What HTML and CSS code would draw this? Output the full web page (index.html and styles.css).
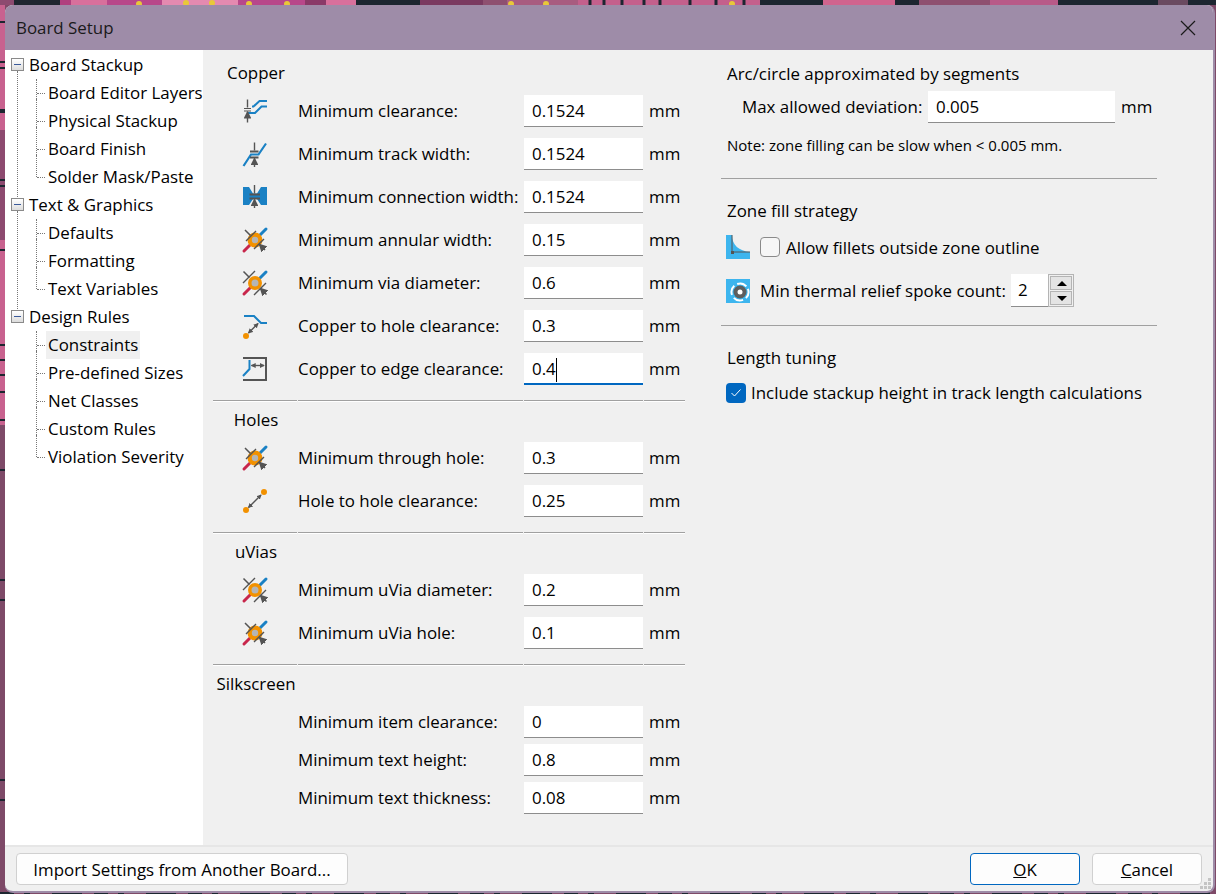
FILE: index.html
```html
<!DOCTYPE html>
<html lang="en">
<head>
  <meta charset="UTF-8" />
  <title>Board Setup</title>
  <link rel="stylesheet" href="styles.css">
</head>
<body>
  <svg class="pcb" width="1216" height="894" viewBox="0 0 1216 894">
    <rect width="1216" height="894" fill="#7e4a68"/>
    <!-- top edge -->
    <rect x="0" y="0" width="14" height="5" fill="#8d4a70"/>
    <rect x="14" y="0" width="46" height="5" fill="#1f2630"/>
    <rect x="60" y="0" width="11" height="5" fill="#b0407e"/>
    <rect x="71" y="0" width="36" height="5" fill="#d8709c"/>
    <rect x="107" y="0" width="55" height="5" fill="#b8488a"/>
    <rect x="162" y="0" width="76" height="5" fill="#e48ab0"/>
    <rect x="238" y="0" width="67" height="5" fill="#b8488a"/>
    <rect x="305" y="0" width="21" height="5" fill="#8a3a68"/>
    <rect x="326" y="0" width="30" height="5" fill="#d8709c"/>
    <rect x="356" y="0" width="64" height="5" fill="#1c2630"/>
    <rect x="420" y="0" width="63" height="5" fill="#7a3a60"/>
    <rect x="483" y="0" width="24" height="5" fill="#8e5070"/>
    <rect x="507" y="0" width="71" height="5" fill="#a85c80"/>
    <rect x="578" y="0" width="182" height="5" fill="#c4608c"/>
    <path d="M590 0v5M604 0v5M622 0v5M644 0v5M660 0v5M690 0v5M716 0v5M744 0v5" stroke="#1c2630" stroke-width="3"/>
    <rect x="760" y="0" width="63" height="5" fill="#1c2630"/>
    <rect x="823" y="0" width="72" height="5" fill="#d0648e"/>
    <rect x="895" y="0" width="24" height="5" fill="#1c2630"/>
    <rect x="919" y="0" width="71" height="5" fill="#8e5070"/>
    <rect x="990" y="0" width="68" height="5" fill="#b85a88"/>
    <rect x="1058" y="0" width="100" height="5" fill="#1c2630"/>
    <rect x="1158" y="0" width="30" height="5" fill="#6a4a60"/>
    <rect x="1188" y="0" width="28" height="5" fill="#1c2630"/>
    <g fill="#e8c838">
      <circle cx="139" cy="4" r="3"/><circle cx="186" cy="3" r="3"/><circle cx="212" cy="3" r="3"/>
      <circle cx="249" cy="4" r="3"/><circle cx="287" cy="4" r="3"/><circle cx="511" cy="4" r="3"/>
      <circle cx="546" cy="4" r="3"/><circle cx="732" cy="4" r="3"/>
    </g>
    <!-- left edge -->
    <rect x="0" y="5" width="5" height="420" fill="#c8628f"/>
    <rect x="0" y="130" width="5" height="110" fill="#8d4a70"/>
    <path d="M0 22h5M0 62h5M0 68h5M0 110h5M0 112h5M0 180h5M0 186h5M0 250h5M0 345h5M0 360h5M0 375h5M0 392h5M0 420h5M0 470h5M0 580h5M0 600h5M0 780h5M0 800h5" stroke="#1c2630" stroke-width="2"/>
    <!-- bottom edge -->
    <path d="M0 893H1216" stroke="#1c2630" stroke-width="2" stroke-dasharray="14 10 6 22 30 12"/>
  </svg>

  <svg class="defs" width="0" height="0">
    <defs>
      <marker id="tip" viewBox="0 0 6 6" refX="5" refY="3" markerWidth="5.6" markerHeight="5.6" orient="auto-start-reverse">
        <path d="M0 0L6 3L0 6z" fill="#545454"/>
      </marker>
      <marker id="tip-sm" viewBox="0 0 6 6" refX="5" refY="3" markerWidth="3.6" markerHeight="4.4" orient="auto-start-reverse">
        <path d="M0 0L6 3L0 6z" fill="#545454"/>
      </marker>
      <g id="via-wide">
        <path d="M1 23L7 17" stroke="#c8264b" stroke-width="3" stroke-linecap="round"/>
        <path d="M17 7L23 1" stroke="#1a81c4" stroke-width="3" stroke-linecap="round"/>
        <circle cx="12" cy="12" r="5.25" fill="#b5b5b5" stroke="#f29100" stroke-width="3.5"/>
        <path d="M0 12L12 0M11 24L23 12" stroke="#545454" stroke-width="1.4"/>
        <path d="M0.5 0.5L6.5 6.5M23.5 23.5L17.5 17.5" stroke="#545454" stroke-width="1.5" marker-end="url(#tip)"/>
      </g>
      <g id="via-hole">
        <path d="M1 23L7 17" stroke="#c8264b" stroke-width="3" stroke-linecap="round"/>
        <path d="M17 7L23 1" stroke="#1a81c4" stroke-width="3" stroke-linecap="round"/>
        <circle cx="12" cy="12" r="7.5" fill="#f29100"/>
        <circle cx="12" cy="12" r="3.2" fill="#b5b5b5"/>
        <path d="M3 13L13 3M11 21L21 11" stroke="#545454" stroke-width="1.4"/>
        <path d="M2 2L7.5 7.5M22 22L16.5 16.5" stroke="#545454" stroke-width="1.5" marker-end="url(#tip)"/>
      </g>
    </defs>
  </svg>

  <div class="dialog">
    <div class="titlebar">
      <span class="title">Board Setup</span>
      <svg class="close" width="16" height="16" viewBox="0 0 16 16"><path d="M1 1L15 15M15 1L1 15" stroke="#1a1a1a" stroke-width="1.2"/></svg>
    </div>

    <div class="content">
      <ul class="tree">
        <li class="root">
          <div class="row"><span class="expander"></span>Board Stackup</div>
          <ul>
            <li><div class="row">Board Editor Layers</div></li>
            <li><div class="row">Physical Stackup</div></li>
            <li><div class="row">Board Finish</div></li>
            <li><div class="row">Solder Mask/Paste</div></li>
          </ul>
        </li>
        <li class="root">
          <div class="row"><span class="expander"></span>Text &amp; Graphics</div>
          <ul>
            <li><div class="row">Defaults</div></li>
            <li><div class="row">Formatting</div></li>
            <li><div class="row">Text Variables</div></li>
          </ul>
        </li>
        <li class="root">
          <div class="row"><span class="expander"></span>Design Rules</div>
          <ul>
            <li><div class="row selected">Constraints</div></li>
            <li><div class="row">Pre-defined Sizes</div></li>
            <li><div class="row">Net Classes</div></li>
            <li><div class="row">Custom Rules</div></li>
            <li><div class="row">Violation Severity</div></li>
          </ul>
        </li>
      </ul>

      <div class="rules">
        <section class="group">
          <h3>Copper</h3>
          <div class="rule">
            <svg width="24" height="24" viewBox="0 0 24 24" fill="none">
              <path d="M9 7.5H10.5L16.5 2H24M5 14H12L18.5 7.5H24" stroke="#1a81c4" stroke-width="2"/>
              <path d="M1 9.5H8M1 12H8" stroke="#545454" stroke-width="1.2"/>
              <path d="M4.5 0.5V8.5M4.5 23.5V13" stroke="#545454" stroke-width="1.4" marker-end="url(#tip)"/>
            </svg>
            <label>Minimum clearance:</label><span class="field">0.1524</span><span class="unit">mm</span>
          </div>
          <div class="rule">
            <svg width="24" height="24" viewBox="0 0 24 24" fill="none">
              <path d="M0.5 24L8 12.5H15.5L23 1.5" stroke="#1a81c4" stroke-width="2.2"/>
              <path d="M7 9.5H15.5M7 15.5H15.5" stroke="#545454" stroke-width="1.8"/>
              <path d="M11.5 0.5V8.5M11.5 25V16.5" stroke="#545454" stroke-width="1.4" marker-end="url(#tip)"/>
            </svg>
            <label>Minimum track width:</label><span class="field">0.1524</span><span class="unit">mm</span>
          </div>
          <div class="rule">
            <svg width="24" height="24" viewBox="0 0 24 24" fill="none">
              <path d="M0 2H6L10 8.5H14L18 2H24V20H18L14 14H10L6 20H0z" fill="#1a81c4"/>
              <path d="M6.5 9.5H17M6.5 13.5H17" stroke="#545454" stroke-width="1.8"/>
              <path d="M11.5 0V8.5M11.5 23V14.5" stroke="#545454" stroke-width="1.4" marker-end="url(#tip)"/>
            </svg>
            <label>Minimum connection width:</label><span class="field">0.1524</span><span class="unit">mm</span>
          </div>
          <div class="rule">
            <svg width="24" height="24" viewBox="0 0 24 24" fill="none"><use href="#via-hole"/></svg>
            <label>Minimum annular width:</label><span class="field">0.15</span><span class="unit">mm</span>
          </div>
          <div class="rule">
            <svg width="24" height="24" viewBox="0 0 24 24" fill="none"><use href="#via-wide"/></svg>
            <label>Minimum via diameter:</label><span class="field">0.6</span><span class="unit">mm</span>
          </div>
          <div class="rule">
            <svg width="24" height="24" viewBox="0 0 24 24" fill="none">
              <path d="M1 2H11L18 9H24" stroke="#1a81c4" stroke-width="2"/>
              <circle cx="3" cy="22" r="3" fill="#f29100"/>
              <path d="M5.5 19L15 9.5" stroke="#545454" stroke-width="1.4" marker-start="url(#tip-sm)" marker-end="url(#tip-sm)"/>
            </svg>
            <label>Copper to hole clearance:</label><span class="field">0.3</span><span class="unit">mm</span>
          </div>
          <div class="rule">
            <svg width="24" height="24" viewBox="0 0 24 24" fill="none">
              <path d="M0 1H23V23H0" stroke="#545454" stroke-width="2"/>
              <path d="M6.5 3V12L0 19" stroke="#1a81c4" stroke-width="2"/>
              <path d="M8.5 8.5H21" stroke="#545454" stroke-width="1.4" marker-start="url(#tip-sm)" marker-end="url(#tip-sm)"/>
            </svg>
            <label>Copper to edge clearance:</label><span class="field focus">0.4<i class="caret"></i></span><span class="unit">mm</span>
          </div>
        </section>
        <div class="sep"><span></span><span></span><span></span><span></span></div>

        <section class="group holes">
          <h3>Holes</h3>
          <div class="rule">
            <svg width="24" height="24" viewBox="0 0 24 24" fill="none"><use href="#via-hole"/></svg>
            <label>Minimum through hole:</label><span class="field">0.3</span><span class="unit">mm</span>
          </div>
          <div class="rule">
            <svg width="24" height="24" viewBox="0 0 24 24" fill="none">
              <circle cx="3" cy="21" r="3" fill="#f29100"/>
              <circle cx="21" cy="3" r="3" fill="#f29100"/>
              <path d="M5.5 18.5L18 6" stroke="#545454" stroke-width="1.4" marker-start="url(#tip-sm)" marker-end="url(#tip-sm)"/>
            </svg>
            <label>Hole to hole clearance:</label><span class="field">0.25</span><span class="unit">mm</span>
          </div>
        </section>
        <div class="sep"><span></span><span></span><span></span><span></span></div>

        <section class="group vias">
          <h3>uVias</h3>
          <div class="rule">
            <svg width="24" height="24" viewBox="0 0 24 24" fill="none"><use href="#via-wide"/></svg>
            <label>Minimum uVia diameter:</label><span class="field">0.2</span><span class="unit">mm</span>
          </div>
          <div class="rule">
            <svg width="24" height="24" viewBox="0 0 24 24" fill="none"><use href="#via-hole"/></svg>
            <label>Minimum uVia hole:</label><span class="field">0.1</span><span class="unit">mm</span>
          </div>
        </section>
        <div class="sep"><span></span><span></span><span></span><span></span></div>

        <section class="group silk">
          <h3>Silkscreen</h3>
          <div class="rule"><i></i><label>Minimum item clearance:</label><span class="field">0</span><span class="unit">mm</span></div>
          <div class="rule"><i></i><label>Minimum text height:</label><span class="field">0.8</span><span class="unit">mm</span></div>
          <div class="rule"><i></i><label>Minimum text thickness:</label><span class="field">0.08</span><span class="unit">mm</span></div>
        </section>
      </div>

      <div class="options">
        <h3>Arc/circle approximated by segments</h3>
        <div class="deviation">
          <label>Max allowed deviation:</label><span class="field">0.005</span><span class="unit">mm</span>
        </div>
        <p class="note">Note: zone filling can be slow when &lt; 0.005 mm.</p>
        <hr>
        <h3>Zone fill strategy</h3>
        <div class="fillets">
          <svg width="24" height="24" viewBox="0 0 24 24">
            <path d="M0 0H6C6 10 13 16 24 17V24H0z" fill="#3db5ee"/>
            <path d="M6 0V17H24" fill="none" stroke="#545454" stroke-width="1"/>
            <rect x="5" y="16" width="3" height="3" fill="#545454"/>
          </svg>
          <span class="check"></span>
          <label>Allow fillets outside zone outline</label>
        </div>
        <div class="spokes">
          <svg width="24" height="24" viewBox="0 0 24 24">
            <rect width="24" height="24" fill="#3db5ee"/>
            <circle cx="14" cy="13" r="8.5" fill="none" stroke="#fff" stroke-width="2" stroke-dasharray="10 3.4" transform="rotate(-22 14 13)"/>
            <circle cx="14" cy="13" r="6.5" fill="#5e5e5e"/>
            <circle cx="14" cy="13" r="2.5" fill="#fff"/>
          </svg>
          <label>Min thermal relief spoke count:</label>
          <div class="spin">
            <span class="spin-value">2</span>
            <div class="spin-btns">
              <span class="up"></span>
              <span class="down"></span>
            </div>
          </div>
        </div>
        <hr class="second">
        <h3>Length tuning</h3>
        <div class="stackup">
          <span class="check on">
            <svg width="12" height="10" viewBox="0 0 12 10"><path d="M1.5 5L4.5 8L10.5 1.5" fill="none" stroke="#fff" stroke-width="1"/></svg>
          </span>
          <label>Include stackup height in track length calculations</label>
        </div>
      </div>
    </div>

    <div class="footer">
      <button>Import Settings from Another Board...</button>
      <div class="actions">
        <button class="ok"><u>O</u>K</button>
        <button><u>C</u>ancel</button>
      </div>
      <svg class="grip" width="12" height="12" viewBox="0 0 12 12" fill="#c4c4c4">
        <rect x="8" y="0" width="3" height="3"/><rect x="4" y="4" width="3" height="3"/><rect x="8" y="4" width="3" height="3"/>
        <rect x="0" y="8" width="3" height="3"/><rect x="4" y="8" width="3" height="3"/><rect x="8" y="8" width="3" height="3"/>
      </svg>
    </div>
  </div>
</body>
</html>
```

FILE: styles.css
```css
* {
  box-sizing: border-box;
}
body {
  margin: 0;
  width: 1216px;
  height: 894px;
  padding: 5px 1px 1px 5px;
  overflow: hidden;
  position: relative;
  font-family: 'Open Sans', 'Noto Sans', sans-serif;
  font-size: 16.9px;
  color: #000;
}
.pcb {
  position: absolute;
  left: 0;
  top: 0;
}
.defs {
  position: absolute;
}
.dialog {
  position: relative;
  height: 888px;
  display: flex;
  flex-direction: column;
  background: #f0f0f0;
  border-right: 2px solid #9e8ca8;
  border-bottom: 2px solid #9e8ca8;
  border-radius: 8px;
  overflow: hidden;
}
.titlebar {
  height: 45px;
  flex: none;
  background: #9e8ca8;
  display: flex;
  align-items: center;
  justify-content: space-between;
  padding: 0 17px 0 11px;
}
.title {
  color: #1a1a1a;
}
.content {
  flex: 1;
  display: flex;
  min-height: 0;
}

/* tree */
.tree, .tree ul {
  list-style: none;
  margin: 0;
  padding: 0;
}
.tree {
  width: 198px;
  flex: none;
  background: #fff;
  padding-top: 1px;
  white-space: nowrap;
}
.tree .row {
  height: 28px;
  line-height: 28px;
  display: flex;
  align-items: center;
}
.root {
  position: relative;
}
.root > .row {
  padding-left: 24px;
  position: relative;
}
.root::before {
  content: '';
  position: absolute;
  left: 12px;
  top: 20px;
  bottom: -8px;
  border-left: 1px dotted #777;
}
.root:last-child::before {
  display: none;
}
.expander {
  position: absolute;
  left: 6px;
  top: 7px;
  width: 13px;
  height: 13px;
  border: 1px solid #8a8a8a;
  background: linear-gradient(#fff, #dcdcdc);
  z-index: 1;
}
.expander::after {
  content: '';
  position: absolute;
  left: 2px;
  top: 5px;
  width: 7px;
  height: 1px;
  background: #3a5a9a;
}
.root ul li {
  position: relative;
  padding-left: 41px;
}
.root ul .row {
  padding: 0 2px;
}
.root ul li::before {
  content: '';
  position: absolute;
  left: 31px;
  top: -8px;
  height: 36px;
  border-left: 1px dotted #777;
}
.root ul li:first-child::before {
  top: 0;
  height: 28px;
}
.root ul li:last-child::before {
  height: 22px;
}
.root ul li::after {
  content: '';
  position: absolute;
  left: 32px;
  top: 14px;
  width: 8px;
  border-top: 1px dotted #777;
}
.tree .selected {
  background: #f0f0f0;
  width: fit-content;
}

/* left rule column */
.rules {
  width: 472px;
  flex: none;
  margin-left: 10px;
  padding-top: 11px;
}
h3 {
  font-weight: normal;
  font-size: inherit;
  margin: 0;
}
.group h3 {
  width: 85px;
  padding-left: 1px;
  text-align: center;
  line-height: 24px;
}
.rule {
  display: grid;
  grid-template-columns: 84px 225px 119px 41px;
  column-gap: 1px;
  align-items: center;
  height: 32px;
  margin-top: 11px;
}
.rule svg {
  justify-self: center;
  overflow: visible;
}
.rule label, .rule .unit {
  margin-top: -2px;
}
.group:first-child .rule:first-of-type {
  margin-top: 10px;
}
.holes, .vias, .silk {
  padding-top: 7px;
}
.holes h3, .vias h3 {
  margin-bottom: -1px;
}
.silk h3 {
  margin-bottom: 10px;
}
.silk .rule {
  margin-top: 6px;
}
.field {
  display: block;
  background: #fff;
  height: 32px;
  line-height: 32px;
  padding-left: 8px;
  border-bottom: 1px solid #8d8d8d;
  white-space: nowrap;
}
.field.focus {
  border-bottom: 2px solid #0067c0;
}
.caret {
  display: inline-block;
  width: 1px;
  height: 24px;
  vertical-align: -7px;
  background: #000;
}
.unit {
  padding-left: 5px;
}
.sep {
  display: grid;
  grid-template-columns: 84px 225px 119px 41px;
  column-gap: 1px;
  margin-top: 15px;
}
.sep span {
  height: 1px;
  background: #a0a0a0;
  box-shadow: 0 1px 0 #fff;
}

/* right option column */
.options {
  width: 436px;
  margin-left: 36px;
  padding-top: 12px;
}
.options h3 {
  padding-left: 6px;
  line-height: 24px;
}
.deviation {
  display: flex;
  align-items: center;
  margin-top: 5px;
  padding-left: 21px;
}
.deviation label {
  width: 186px;
  margin-top: -2px;
  white-space: nowrap;
}
.deviation .field {
  width: 187px;
  margin-left: 0;
}
.deviation .unit {
  padding-left: 6px;
  margin-top: -2px;
}
.note {
  margin: 12px 0 0;
  padding-left: 6px;
  font-size: 15px;
  line-height: 20px;
}
hr {
  border: 0;
  height: 1px;
  background: #a0a0a0;
  margin: 23px 0 20px;
}
hr.second {
  margin: 18px 0 20px;
}
.fillets, .spokes, .stackup {
  display: flex;
  align-items: center;
  padding-left: 5px;
}
.fillets {
  margin-top: 12px;
}
.check {
  width: 20px;
  height: 20px;
  margin: 0 6px 0 10px;
  border: 1px solid #8a8a8a;
  border-radius: 4px;
  background: #f6f6f6;
}
.check.on {
  margin: 0 5px 0 0;
  border: 0;
  background: #0067c0;
  display: flex;
  align-items: center;
  justify-content: center;
}
.spokes {
  margin-top: 15px;
}
.spokes label {
  margin: 0 6px 0 10px;
  width: 245px;
  white-space: nowrap;
}
.spin {
  display: flex;
  height: 33px;
}
.spin-value {
  width: 37px;
  background: #fff;
  padding-left: 7px;
  line-height: 31px;
  border-bottom: 1px solid #8d8d8d;
}
.spin-btns {
  width: 26px;
  border: 1px solid #b4b4b4;
  padding: 1px;
  display: flex;
  flex-direction: column;
  gap: 1px;
}
.spin-btns span {
  flex: 1;
  background: #e4e4e4;
  border: 1px solid #b4b4b4;
  position: relative;
}
.spin-btns span::after {
  content: '';
  position: absolute;
  left: 6px;
  top: 4px;
  border-left: 5px solid transparent;
  border-right: 5px solid transparent;
}
.spin-btns .up::after {
  border-bottom: 5px solid #000;
}
.spin-btns .down::after {
  border-top: 5px solid #000;
}
.stackup {
  margin-top: 11px;
}

/* footer */
.footer {
  height: 46px;
  flex: none;
  border-top: 2px solid #e6e6e6;
  display: flex;
  align-items: flex-start;
  justify-content: space-between;
  padding: 6px 11px 0 11px;
  position: relative;
}
button {
  height: 32px;
  width: 332px;
  padding: 0;
  font: inherit;
  color: #000;
  background: #fdfdfd;
  border: 1px solid #d0d0d0;
  border-radius: 4px;
}
.actions {
  display: flex;
  gap: 12px;
}
.actions button {
  width: 110px;
}
button.ok {
  border: 1px solid #0067c0;
}
.grip {
  position: absolute;
  right: 1px;
  bottom: 1px;
}
```
